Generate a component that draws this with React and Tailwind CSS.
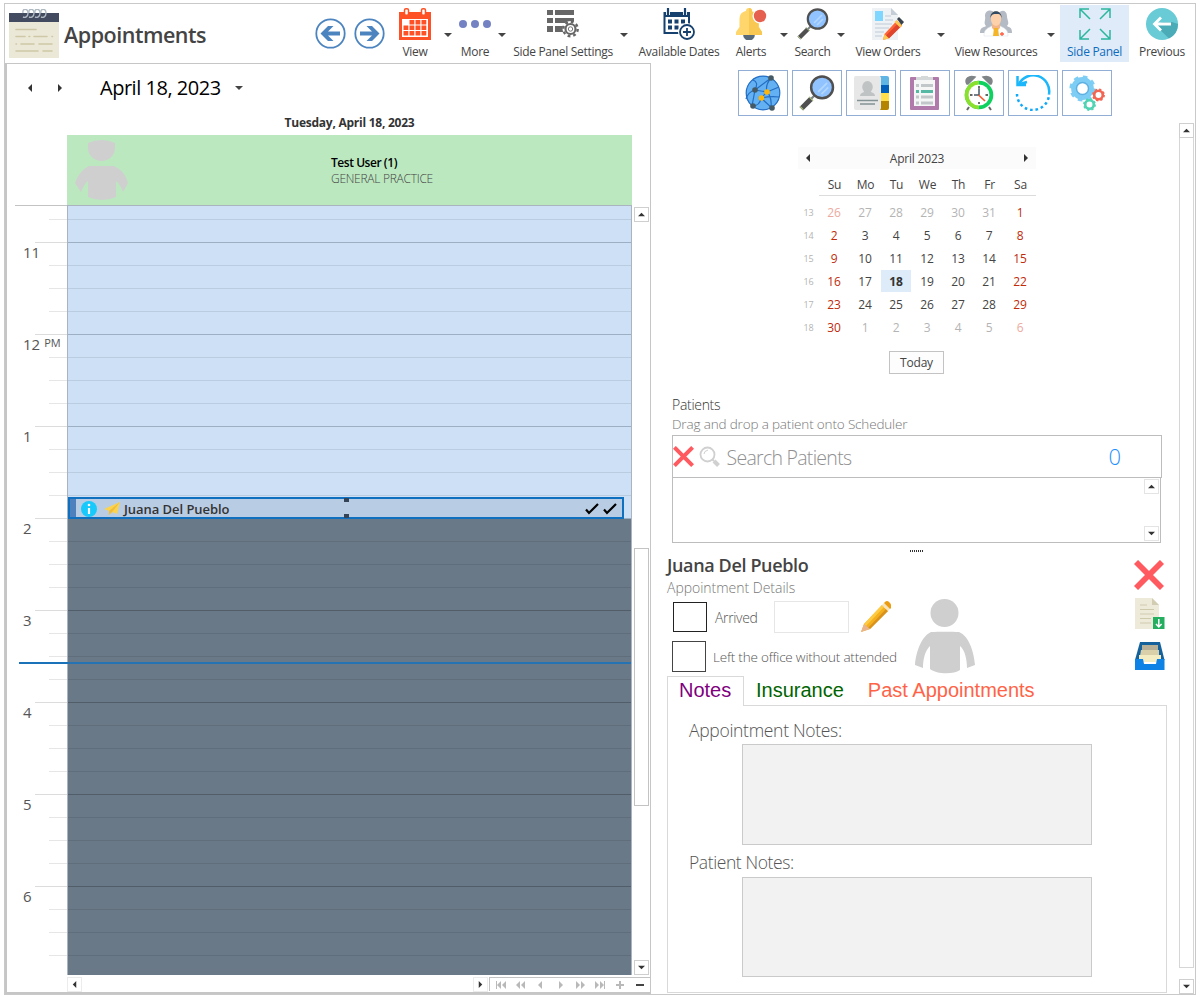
import React from "react";

const Caret = ({ className = "w-[26px]" }) => (
  <div className={`flex shrink-0 justify-center pt-[28px] ${className}`}>
    <svg width="8" height="4" viewBox="0 0 8 4"><path d="M0 0H8L4 4Z" fill="#444" /></svg>
  </div>
);

const Tri = ({ dir = "left", size = 7, color = "#333" }) => {
  const d = {
    left: "M6 0V8L2 4Z",
    right: "M2 0V8L6 4Z",
    up: "M0 6H8L4 2Z",
    down: "M0 2H8L4 6Z",
  }[dir];
  return <svg width={size} height={size} viewBox="0 0 8 8" className="block"><path d={d} fill={color} /></svg>;
};

const ScrollButton = ({ dir, className = "border-[#cfcfcf]" }) => (
  <div className={`flex h-[15px] w-[15px] shrink-0 items-center justify-center border bg-white ${className}`}>
    <Tri dir={dir} />
  </div>
);

const Tool = ({ label, width, active, children }) => (
  <div className={`flex h-[57px] shrink-0 flex-col items-center pt-[3px] ${width} ${active ? "bg-[#dfebf8] text-[#0f6cbd]" : "text-[#444]"}`}>
    <div className="flex h-8 w-8 items-center justify-center">{children}</div>
    <div className="mt-[3px] whitespace-nowrap text-[12px] leading-[18px] tracking-[-0.3px]">{label}</div>
  </div>
);

const NotepadIcon = () => (
  <svg width="50" height="49" viewBox="0 0 50 49">
    <rect y="4" width="50" height="45" fill="#ebe8d8" />
    <rect y="4" width="50" height="9" fill="#434b60" />
    <g fill="none" stroke="#aeb9c2" strokeWidth="1.400">
      {[15, 21, 27, 33].map((x) => <path key={x} d={`M${x - 1} 4c-1-5 5-5 5 0c0 4-3 5-5 4`} />)}
    </g>
    <g stroke="#cfc8a6" strokeWidth="1.600" strokeLinecap="round">
      <path d="M7 20.500H27M7 27.500H16M20 27.500h.8M25 27.500H38M43 27.500h.5M7 35h.5M12 35H25M30 35H43M7 42H29M34 42H43" />
    </g>
  </svg>
);

const RoundArrow = ({ flip }) => (
  <svg width="31" height="31" viewBox="0 0 31 31" className={flip ? "-scale-x-100" : ""}>
    <circle cx="15.500" cy="15.500" r="14.200" fill="white" stroke="#4c84c0" strokeWidth="1.800" />
    <path d="M5.500 15.500L13 8h5.500L13 13.600H25v3.800H13L18.500 23H13Z" fill="#4c84c0" />
  </svg>
);

const CalendarIcon = () => (
  <svg width="32" height="32" viewBox="0 0 32 32">
    <path d="M0 4H32V32H0Z" fill="#fe5125" />
    <rect x="5.500" y="0.800" width="4" height="6.500" rx="1.500" fill="#fff" stroke="#fe5125" strokeWidth="1.500" />
    <rect x="22.500" y="0.800" width="4" height="6.500" rx="1.500" fill="#fff" stroke="#fe5125" strokeWidth="1.500" />
    <rect x="3" y="11" width="26" height="18" fill="#fff" />
    {[0, 1, 2].map((r) => [0, 1, 2, 3].map((c) => (r === 0 && c === 0 ? null :
      <rect key={`${r}-${c}`} x={4.500 + c * 6} y={12 + r * 5.500} width="4.800" height="4.500" fill="#fe5125" />)))}
  </svg>
);

const PanelSettingsIcon = () => (
  <svg width="32" height="32" viewBox="0 0 32 32">
    <g fill="#676767">
      <path d="M0 2h6v5H0zM8 2h19v5H8zM0 10h6v5H0zM8 10h19v5H8zM0 18h6v6H0zM8 18h9v6H8z" />
    </g>
    <circle cx="23.500" cy="21" r="8" fill="#fff" />
    <circle cx="23.500" cy="21" r="7.200" fill="none" stroke="#676767" strokeWidth="2.400" strokeDasharray="2.830" />
    <circle cx="23.500" cy="21" r="5" fill="none" stroke="#676767" strokeWidth="2.200" />
    <circle cx="23.500" cy="21" r="2.200" fill="#fff" stroke="#777" />
  </svg>
);

const AvailableIcon = () => (
  <svg width="32" height="32" viewBox="0 0 32 32" fill="none" stroke="#16416e">
    <path d="M1.500 4V25h16" strokeWidth="2" /><path d="M1 6.500h26" strokeWidth="5" /><path d="M26 5v14" strokeWidth="2" />
    <path d="M5 1v6M22 1v6" stroke="#fff" strokeWidth="4" /><path d="M5 0v7M22 0v7" strokeWidth="2.200" />
    <path d="M5 13.500h4M11.500 13.500h4M18 13.500h4M5 19.500h4M11.500 19.500h4" strokeWidth="4" />
    <circle cx="24" cy="24" r="8" fill="#fff" stroke="#fff" strokeWidth="2" />
    <circle cx="24" cy="24" r="7" fill="#fff" strokeWidth="1.800" /><path d="M20 24h8M24 20v8" strokeWidth="1.800" />
  </svg>
);

const BellIcon = () => (
  <svg width="32" height="32" viewBox="0 0 32 32">
    <path d="M8 26h12a5 5.500 0 0 1-12 0" fill="#58697a" />
    <path d="M14 0a3 3 0 0 0-3 3C6 4 4.500 7 4.500 12v7L1 24v3h26v-3l-3-5V4H17a3 3 0 0 0-3-4" fill="#fed66b" />
    <path d="M14 0v27h13v-3l-3.500-5v-7C23.500 7 21 4 17 3.500A3 3 0 0 0 14 0" fill="#f9c852" />
    <circle cx="25" cy="8" r="7.500" fill="#fff" /><circle cx="25" cy="8" r="6.200" fill="#e5604f" />
  </svg>
);

const Magnifier = ({ size = 32 }) => (
  <svg width={size} height={size} viewBox="0 0 32 32">
    <path d="M14 18L10 22" stroke="#7d8488" strokeWidth="2" />
    <path d="M11 21L2 30" stroke="#505050" strokeWidth="4.500" />
    <path d="M9 19.500l3.500 3.500M1 28l3 3" stroke="#a8bf80" strokeWidth="1" />
    <circle cx="20.500" cy="11" r="9.700" fill="#90c3ff" stroke="#505050" strokeWidth="2.200" />
    <path d="M17 15l8-8M20 17l6-6" stroke="#b4d7ff" strokeWidth="1.500" />
  </svg>
);

const OrdersIcon = () => (
  <svg width="32" height="32" viewBox="0 0 32 32">
    <path d="M0 0H19L26 7V32H0Z" fill="#eff2f5" /><path d="M19 0V7h7Z" fill="#c5cdd7" />
    <rect x="3" y="3" width="8" height="10" fill="#7fd6ff" />
    <path d="M13 8h6M13 12h8M3 16h17M3 20h14M3 24h9M3 28h7" stroke="#d1d8e0" strokeWidth="1.300" />
    <path d="M11 32l1.500-6L25 12.500l5 5L17 30Z" fill="#ff6536" /><path d="M13.500 28L27 14.500l3 3L17 30.500Z" fill="#df452d" />
    <path d="M11 32l1.500-6 4.500 4.500Z" fill="#ffc951" /><path d="M22.500 14l5.500 5.500 2-2L24.500 12Z" fill="#ffc951" />
    <path d="M25 11l2-2 5 5-2.500 3Z" fill="#38424c" />
  </svg>
);

const ResourcesIcon = () => (
  <svg width="32" height="32" viewBox="0 0 32 32">
    <path d="M0 25c0-6 3-5 6-7C3 15 6 12 5 8c0-6 7-7 9-3h5c3-4 8-2 8 3c0 4 3 7 0 10c3 2 5 1 5 7Z" fill="#b5bbc4" />
    <path d="M4 28c0-7 4-8 8-10h8c4 2 8 3 8 10Z" fill="#fff" stroke="#dfe4e8" strokeWidth=".6" />
    <path d="M12 16h8v4l-4 4-4-4Z" fill="#f3b58b" />
    <path d="M11 7c0-5 10-5 10 0v4c0 9-10 9-10 0Z" fill="#ffd1ab" /><path d="M10.500 10c-1-9 12-9 11 0c-1-4-2-4-5-4s-5 0-6 4" fill="#334c63" />
    <path d="M14 20h4l1 8H13Z" fill="#f5b52a" /><path d="M20 26h4M22 24v4" stroke="#ff5c40" strokeWidth="1.300" />
  </svg>
);

const ExpandIcon = () => (
  <svg width="32" height="32" viewBox="0 0 32 32" fill="none" stroke="#2bb79e" strokeWidth="1.500">
    <path d="M1 10V1H10M1 1L11 11M22 1H31V10M31 1L21 11M1 22V31H10M1 31L11 21M22 31H31V22M31 31L21 21" />
  </svg>
);

const PreviousIcon = () => (
  <svg width="32" height="32" viewBox="0 0 32 32">
    <circle cx="16" cy="16" r="16" fill="#69cbd5" />
    <path d="M9 17l14 13.500a16 16 0 0 0 9-14.500l-6-2H17Z" fill="#4bacb7" />
    <path d="M25 16H9M15 9.500L8.500 16l6.500 6.500" fill="none" stroke="#fff" strokeWidth="2.800" />
  </svg>
);

const GlobeIcon = () => (
  <svg width="36" height="36" viewBox="0 0 36 36">
    <circle cx="18" cy="18" r="17" fill="#63b1f2" />
    <g fill="none" stroke="#246ec4" strokeWidth="1.200">
      <circle cx="18" cy="18" r="16.800" /><path d="M26 3Q20 10 22 17L34 12M22 17L10 15Q3 17 1 24M10 15Q14 7 8 5M10 15L7 31Q15 31 16 23L22 17Q27 22 26 32M16 23Q25 21 34 22M10 15Q18 9 26 3M16 23L27 33" />
    </g>
    <g fill="#455a64"><circle cx="26" cy="3" r="2.800" /><circle cx="10" cy="15" r="2.800" /><circle cx="8" cy="31" r="2.800" /><circle cx="27" cy="33" r="2.800" /></g>
    <g fill="#ffb507"><circle cx="22" cy="17" r="2.800" /><circle cx="16.500" cy="23" r="2.800" /></g>
  </svg>
);

const ContactIcon = () => (
  <svg width="35" height="34" viewBox="0 0 35 34">
    <path d="M26 0h7q2 0 2 2v7h-9Z" fill="#5fb5e4" /><path d="M26 9h9v8h-9Z" fill="#0060b9" /><path d="M26 17h9v8h-9Z" fill="#ffe04a" /><path d="M26 25h9v7q0 2-2 2h-7Z" fill="#b58500" />
    <rect width="27" height="34" rx="2" fill="#e7e7e7" />
    <ellipse cx="13.500" cy="11" rx="5.300" ry="6" fill="#bfc3c4" /><path d="M6 20c0-6 15-6 15 0Z" fill="#bfc3c4" />
    <path d="M3 24.500H24M6 28H21" stroke="#839295" strokeWidth="1.300" />
  </svg>
);

const ClipboardIcon = () => (
  <svg width="30" height="34" viewBox="0 0 30 34">
    <rect y="1" width="29" height="33" rx="1" fill="#b07bab" /><rect x="4" y="4" width="21" height="26" fill="#f5f6f6" />
    <path d="M6 1H11V-1H18V1H23V4H6Z" fill="#d5d8d9" />
    <path d="M6 9.500h3M6 21h3M6 27h3M11 9.500h12M11 21h12M11 27h12" stroke="#c2c7c9" strokeWidth="3" />
    <path d="M6 15.500h3M11 15.500h12" stroke="#55b9a4" strokeWidth="3" />
  </svg>
);

const ClockIcon = () => (
  <svg width="30" height="36" viewBox="0 0 30 36">
    <path d="M5 32L3 35M25 32l2 3" stroke="#666" strokeWidth="2" />
    <path d="M3 9C0 4 5 0 11 2L4 9ZM27 9c3-5-2-9-8-7L26 9Z" fill="#7f8487" stroke="#7f8487" strokeWidth="1.500" />
    <circle cx="15" cy="20" r="14.300" fill="#0fd15f" /><path d="M15 5.700a14.300 14.300 0 0 0 0 28.600Z" fill="#8ae02d" />
    <circle cx="15" cy="20" r="10.500" fill="#fff" />
    <path d="M15 11v2.500M15 27v2M6 20h2.500M21.500 20H24" stroke="#333" strokeWidth="1.400" />
    <path d="M15 13.500V20M10 20h5" stroke="#455a64" strokeWidth="1.500" /><path d="M14.500 20l6.500 6" stroke="#f15a2e" strokeWidth="1.700" />
  </svg>
);

const RefreshIcon = () => (
  <svg width="36" height="36" viewBox="0 0 36 36" fill="none" stroke="#10a8f8" strokeWidth="2.500">
    <path d="M34 19A16 16 0 0 0 4 9" stroke="#1bb7fa" /><path d="M2.500 1V10H11M3 9.500L12 7" stroke="#1bb7fa" />
    <path d="M2 19A16 16 0 0 0 34 19" strokeDasharray="2.600 2.900" />
  </svg>
);

const Gear = ({ cx, cy, r, color, hole, teeth = 8 }) => (
  <g>
    <circle cx={cx} cy={cy} r={r * 0.68} fill="none" stroke={color} strokeWidth={r * 0.42} />
    <circle cx={cx} cy={cy} r={r * 0.88} fill="none" stroke={color} strokeWidth={r * 0.28} strokeDasharray={(r * 0.88 * Math.PI) / teeth} />
    {hole && <circle cx={cx} cy={cy} r={r * 0.47} fill="none" stroke={hole} strokeWidth="1.500" />}
  </g>
);
const GearsIcon = () => (
  <svg width="36" height="36" viewBox="0 0 36 36">
    <Gear cx={13.500} cy={13.500} r={12.800} color="#7dcdf4" hole="#5fb0e2" />
    <Gear cx={29.500} cy={20} r={6.300} color="#f26553" /><Gear cx={20.500} cy={29.500} r={6.300} color="#52d3b4" />
  </svg>
);

const Cross = ({ size }) => (
  <svg width={size} height={size} viewBox="0 0 30 30"><path d="M2 2L28 28M28 2L2 28" stroke="#ff5a5f" strokeWidth="5.800" /></svg>
);

const Person = () => (
  <svg width="62" height="76" viewBox="0 0 62 76" fill="#cfcfcf">
    <circle cx="30.500" cy="15" r="14" />
    <path d="M17 34C24 33.500 38 33.500 45 34C55 38 60 54 61 67L53 70C53 62 51 52 46 48V72C39 77 22 76 16 71V48C11 53 9 61 9 70L1 67C2 53 8 38 17 34Z" />
  </svg>
);

const DocIcon = () => (
  <svg width="30" height="31" viewBox="0 0 30 31">
    <path d="M0 0H17L24 7V31H0Z" fill="#edeada" /><path d="M17 0V7h7Z" fill="#d2ccb3" />
    <path d="M5 7h7M5 11.500h14M5 16h14M5 20.500h11M5 25h11" stroke="#cfc9ac" strokeWidth="1.200" />
    <rect x="18" y="19" width="11.500" height="12" fill="#24ae5f" /><path d="M23.800 21v8M21 26l2.800 3 2.800-3" fill="none" stroke="#fff" strokeWidth="1.500" />
  </svg>
);

const TrayIcon = () => (
  <svg width="30" height="28" viewBox="0 0 30 28">
    <path d="M5 0H25L29.500 18H0Z" fill="#15619b" /><path d="M7 3H23V9H7Z" fill="#b7af96" /><path d="M6 8H24V14H5Z" fill="#d9d0aa" />
    <path d="M4 13H26V20H4Z" fill="#f4ecc2" /><path d="M0 17H8L9 22H21L22 17H29.500V28H0Z" fill="#0f82e6" />
  </svg>
);

const PencilIcon = () => (
  <svg width="31" height="32" viewBox="0 0 31 32">
    <path d="M1 31L4 23L22 4L28 10L10 28Z" fill="#f4b01d" /><path d="M4 23L22 4l2 2L6 25Z" fill="#ffca43" /><path d="M8 27L26 8l2 2L10 28Z" fill="#d9921e" />
    <path d="M1 31L4 23L10 28Z" fill="#e8b58f" /><path d="M22 4l6 6 2-2-6-6Z" fill="#f5e4bd" /><path d="M24 2q3-4 6 0t0 6Z" fill="#eb9c10" />
  </svg>
);

const Check = () => (
  <svg width="14" height="13" viewBox="0 0 14 13"><path d="M1 7.500L4 11L13 2" fill="none" stroke="#000" strokeWidth="2.200" /></svg>
);

const hours = ["11", "12", "1", "2", "3", "4", "5", "6"];

const Ruler = () => (
  <div className="h-[770px] w-[60px] shrink-0 overflow-hidden">
    <div className="ml-[8px] h-px bg-[#c3c3c3]" />
    <div className="ml-[42px] h-[14px] border-b border-[#e6e6e6]" />
    <div className="ml-[28px] h-[23px] border-b border-[#dcdcdc]" />
    {hours.map((h) => (
      <div key={h} className="flex h-[92px]">
        <div className="-mt-px flex w-[28px] shrink-0 items-start gap-[4px] whitespace-nowrap pl-[16px] text-[15px] leading-5 text-[#555]">
          {h}
          {h === "12" && <span className="text-[11px] leading-[18px]">PM</span>}
        </div>
        <div className="w-8">
          <div className="ml-[14px] h-[23px] border-b border-[#e6e6e6]" />
          <div className="ml-[14px] h-[23px] border-b border-[#e6e6e6]" />
          <div className="ml-[14px] h-[23px] border-b border-[#e6e6e6]" />
          <div className="h-[23px] border-b border-[#dcdcdc]" />
        </div>
      </div>
    ))}
  </div>
);

const Slots = () => (
  <div className="h-[769px] overflow-hidden">
    <div className="h-[14px] border-b border-[#b9cce0] bg-[#cee0f5]" />
    <div className="h-[23px] border-b border-[#9dafc3] bg-[#cee0f5]" />
    {Array.from({ length: 32 }, (_, i) => {
      const dark = i >= 12;
      const hour = i % 4 === 3;
      const line = dark ? (hour ? "border-[#515d69]" : "border-[#606d7b]") : hour ? "border-[#9dafc3]" : "border-[#b9cce0]";
      return <div key={i} className={`h-[23px] border-b ${dark ? "bg-[#6a7987]" : "bg-[#cee0f5]"} ${line}`} />;
    })}
  </div>
);

const Appointment = () => (
  <div className="absolute left-0 top-[291px] flex h-[22px] w-[556px] items-center border-2 border-[#0f70c0] bg-[#b8cce4]">
    <div className="h-full w-[6px] bg-[#4e80bd]" />
    <svg className="ml-[5px] mt-px" width="16" height="16" viewBox="0 0 16 16">
      <circle cx="8" cy="8" r="8" fill="#18c9fb" /><path d="M8 7v6" stroke="#fff" strokeWidth="2.200" /><circle cx="8" cy="4" r="1.300" fill="#fff" />
    </svg>
    <svg className="ml-[7px] mt-px" width="16" height="14" viewBox="0 0 16 14">
      <path d="M0 7L16 0L13 12L8 10L5 13V9Z" fill="#fbd34f" /><path d="M16 0L5 9v4l3-3Z" fill="#efbd3a" />
    </svg>
    <span className="ml-[4px] mt-[2px] text-[13px] font-semibold leading-4 tracking-[-0.050px] text-[#333]">Juana Del Pueblo</span>
    <div className="absolute -top-px left-[274px] h-[4px] w-[5px] bg-[#344456]" />
    <div className="absolute -bottom-px left-[274px] h-[4px] w-[5px] bg-[#344456]" />
    <div className="ml-auto mt-px flex gap-[4px] pr-[5px]"><Check /><Check /></div>
  </div>
);

const NavIcon = ({ kind }) => {
  const c = kind === "minus" ? "#444" : "#b9b9b9";
  const d = {
    first: "M0 0h1v8h-1zM5 0v8L1 4zM10 0v8L6 4z",
    back2: "M4 0v8L0 4zM9 0v8L5 4z",
    back: "M6 0v8L2 4z",
    fwd: "M3 0v8L7 4z",
    fwd2: "M1 0v8L5 4zM6 0v8L10 4z",
    last: "M9 0h1v8h-1zM0 0v8L4 4zM5 0v8L9 4z",
    plus: "M4 0h2v3h3v2h-3v3h-2v-3h-3v-2h3z",
    minus: "M1 3h8v2h-8z",
  }[kind];
  return <div className="flex flex-1 justify-center"><svg width="10" height="8" viewBox="0 0 10 8"><path d={d} fill={c} /></svg></div>;
};

const Scheduler = () => (
  <section className="flex h-[931px] w-[646px] shrink-0 flex-col border-b-2 border-l-2 border-r border-t border-[#c6c6c6]">
    <div className="flex h-[47px] items-center pl-[19px]">
      <Tri dir="left" size={8} /><div className="w-[22px]" /><Tri dir="right" size={8} />
      <div className="ml-[36px] w-[122px] whitespace-nowrap text-[20px] leading-7 tracking-[-0.480px] text-black">April 18, 2023</div>
      <svg className="ml-[13px]" width="8" height="4" viewBox="0 0 8 4"><path d="M0 0H8L4 4Z" fill="#444" /></svg>
    </div>
    <div className="ml-[60px] h-[24px] w-[565px] pt-[3px] text-center text-[12px] font-bold leading-[18px] tracking-[-0.250px] text-[#333]">Tuesday, April 18, 2023</div>
    <div className="ml-[60px] flex h-[70px] w-[565px] bg-[#bce8c0]">
      <svg className="ml-[8px] mt-[5px]" width="54" height="61" viewBox="0 0 54 61" fill="#cfcfcf">
        <path d="M13 3Q27-3 40 3V9C38 25 15 25 13 9Z" /><path d="M14 26H39Q50 31 53 43L48 52Q45 44 41 41V57Q27 63 13 57V41Q9 44 6 52L0 43Q4 31 14 26Z" />
      </svg>
      <div className="ml-[202px] pt-[20px] text-[12px] leading-4 tracking-[-0.450px]">
        <div className="font-semibold text-black">Test User (1)</div>
        <div className="font-light tracking-[-0.280px] text-[#444]">GENERAL PRACTICE</div>
      </div>
    </div>
    <div className="flex h-[770px]">
      <Ruler />
      <div className="relative h-[770px] w-[565px] border-l border-r border-t border-[#a9b4c0]">
        <Slots />
        <Appointment />
        <div className="absolute -left-[49px] top-[456px] h-[2px] w-[49px] bg-[#1a72b8]" />
        <div className="absolute left-0 top-[456px] h-[2px] w-full bg-[#2573b3]" />
      </div>
      <div className="ml-[2px] flex w-[15px] flex-col pt-[2px]">
        <ScrollButton dir="up" />
        <div className="mt-[326px] h-[258px] border border-[#c3c3c3] bg-white" />
        <ScrollButton dir="down" className="mt-auto border-[#cfcfcf]" />
      </div>
    </div>
    <div className="flex h-[16px] pl-[60px] pt-[2px]">
      <ScrollButton dir="left" className="border-[#ececec]" />
      <ScrollButton dir="right" className="ml-[391px] border-[#ececec]" />
      <div className="ml-[1px] flex flex-1 items-center border-l border-t border-[#c3c3c3] pl-px">
        {["first", "back2", "back", "fwd", "fwd2", "last", "plus", "minus"].map((k) => <NavIcon key={k} kind={k} />)}
      </div>
    </div>
  </section>
);

const weeks = [
  [13, 26, 27, 28, 29, 30, 31, 1],
  [14, 2, 3, 4, 5, 6, 7, 8],
  [15, 9, 10, 11, 12, 13, 14, 15],
  [16, 16, 17, 18, 19, 20, 21, 22],
  [17, 23, 24, 25, 26, 27, 28, 29],
  [18, 30, 1, 2, 3, 4, 5, 6],
];

const dayColor = (row, col, day) => {
  const outside = (row === 0 && day > 20) || (row === 5 && day < 20);
  if (col === 0 || col === 6) return outside ? "text-[#ecaa9e]" : "text-[#c02b0a]";
  return outside ? "text-[#b4b4b4]" : "text-[#444]";
};

const MonthCalendar = () => (
  <div className="ml-[147px] mt-[31px] w-[238px] text-[12px] tracking-[-0.2px] text-[#444]">
    <div className="flex h-[22px] items-center justify-between bg-[#fbfbfb] px-[6px]">
      <Tri dir="left" size={8} /><span className="pt-[2px]">April 2023</span><Tri dir="right" size={8} />
    </div>
    <div className="ml-[21px] flex h-[27px] border-b border-[#dcdcdc] pt-[7px]">
      {["Su", "Mo", "Tu", "We", "Th", "Fr", "Sa"].map((d) => <div key={d} className="w-[31px] shrink-0 text-center leading-[18px]">{d}</div>)}
    </div>
    <div className="mt-[5px]">
      {weeks.map(([week, ...days], r) => (
        <div key={week} className="flex h-[23px]">
          <div className="w-[21px] text-center text-[9px] leading-[23px] text-[#b4b4b4]">{week}</div>
          {days.map((day, c) => (
            <div key={c} className={`mr-px h-[22px] w-[30px] shrink-0 text-center leading-[23px] ${r === 3 && c === 2 ? "bg-[#deebf9] font-bold text-[#333]" : dayColor(r, c, day)}`}>{day}</div>
          ))}
        </div>
      ))}
    </div>
    <div className="ml-[91px] mt-[12px] flex h-[23px] w-[55px] items-center justify-center border border-[#c3c3c3] bg-[#fdfdfd] pt-px">Today</div>
  </div>
);

const Patients = () => (
  <div className="ml-[21px] mt-[21px] w-[490px]">
    <div className="h-[19px] text-[14px] font-light leading-[20px] tracking-[-0.3px] text-[#333]">Patients</div>
    <div className="h-[21px] text-[13.500px] font-light leading-[20px] tracking-[-0.160px] text-[#777]">Drag and drop a patient onto Scheduler</div>
    <div className="flex h-[43px] items-center border border-[#bdbdbd]">
      <Cross size={21} />
      <svg className="ml-[5px]" width="22" height="22" viewBox="0 0 22 22" fill="none" stroke="#d0d0d0">
        <circle cx="8.500" cy="8.500" r="7" strokeWidth="1.800" /><path d="M5 8q0-3 4-4" /><path d="M13 13l2 2" strokeWidth="2" /><path d="M15 15l4.500 4.500" strokeWidth="4" />
      </svg>
      <span className="ml-[5.500px] pt-[3px] text-[19.500px] font-light leading-6 tracking-[-0.720px] text-[#909090]">Search Patients</span>
      <span className="ml-auto mr-[40px] text-[22px] font-light text-[#1e90ff]">0</span>
    </div>
    <div className="flex h-[65px] w-[489px] flex-col items-end justify-between border border-t-0 border-[#bdbdbd] py-[1px] pr-px">
      <ScrollButton dir="up" className="border-[#e4e4e4]" /><ScrollButton dir="down" className="border-[#e4e4e4]" />
    </div>
    <div className="ml-[238px] mt-[7px] flex gap-px">
      {Array.from({ length: 7 }, (_, i) => <div key={i} className="h-[2px] w-px bg-[#333]" />)}
    </div>
  </div>
);

const Details = () => (
  <div className="ml-[16px] mt-[1px] flex h-[123px] w-[500px]">
    <div className="w-[232px] shrink-0 whitespace-nowrap font-light text-[#555]">
      <div className="h-[24px] text-[18px] font-semibold leading-[25px] tracking-[-0.370px] text-[#444]">Juana Del Pueblo</div>
      <div className="h-[22px] text-[14px] leading-[22px] tracking-[-0.020px] text-[#777]">Appointment Details</div>
      <div className="flex h-[39px] items-start pl-[6px] pt-[2px]">
        <div className="mt-[1px] h-[30px] w-[34px] border border-[#222]" />
        <div className="ml-[8px] w-[59px] text-[14px] leading-[33px] tracking-[-0.350px]">Arrived</div>
        <div className="h-[32px] w-[75px] border border-[#e6e6e6]" />
        <div className="ml-[11px]"><PencilIcon /></div>
      </div>
      <div className="flex h-[39px] items-start pl-[5px] pt-[3px]">
        <div className="h-[31px] w-[34px] shrink-0 border border-[#444]" />
        <div className="ml-[7px] text-[13.500px] leading-[33px] tracking-[-0.210px]">Left the office without attended</div>
      </div>
    </div>
    <div className="ml-[15px] pt-[45px]"><Person /></div>
    <div className="ml-auto flex w-[32px] flex-col items-start pt-[7px]">
      <div className="-ml-px"><Cross size={30} /></div><div className="mt-[8px]"><DocIcon /></div><div className="mt-[13px]"><TrayIcon /></div>
    </div>
  </div>
);

const NotesPanel = () => (
  <div className="ml-[16px] w-[500px]">
    <div className="flex h-[30px] font-['Liberation_Sans',sans-serif] text-[20px] leading-[27px]">
      <div className="z-10 h-[30px] w-[77px] border border-b-0 border-[#d9d9d9] bg-white pl-[11px] text-[#800080]">Notes</div>
      <div className="pl-[12px] pt-px text-[#006400]">Insurance</div>
      <div className="pl-[24px] pt-px text-[#ff6347]">Past Appointments</div>
    </div>
    <div className="-mt-px h-[288px] border border-[#d9d9d9] pl-[21px] pt-[12px] text-[17.500px] font-light tracking-[-0.3px] text-[#555]">
      <div className="h-[26px] leading-[24px]">Appointment Notes:</div>
      <div className="ml-[53px] h-[101px] w-[350px] border border-[#cacaca] bg-[#f2f2f2]" />
      <div className="mt-[5px] h-[27px] leading-[24px] tracking-[-0.4px]">Patient Notes:</div>
      <div className="ml-[53px] h-[100px] w-[350px] border border-[#cacaca] bg-[#f2f2f2]" />
    </div>
  </div>
);

const quickTools = [GlobeIcon, () => <Magnifier size={36} />, ContactIcon, ClipboardIcon, ClockIcon, RefreshIcon, GearsIcon];

export default function App() {
  return (
    <div className="h-[997px] w-[1203px] overflow-hidden bg-white pl-[4px] pt-[3px] font-['Open_Sans','Noto_Sans',sans-serif]">
      <div className="h-[992px] w-[1192px] border border-[#c9c9c9]">
        <header className="flex h-[59px] items-start pt-px">
          <div className="ml-[4px] pt-[4px]"><NotepadIcon /></div>
          <h1 className="ml-[5px] w-[251px] pt-[14px] text-[21.500px] font-semibold leading-[32px] tracking-[-0.480px] text-[#444]">Appointments</h1>
          <div className="flex w-[80px] gap-[8px] pt-[13px]"><RoundArrow /><RoundArrow flip /></div>
          <Tool label="View" width="w-[40px]"><CalendarIcon /></Tool>
          <Caret />
          <Tool label="More" width="w-[28px]">
            <svg width="32" height="32" viewBox="0 0 32 32" fill="#7482c4"><circle cx="4" cy="16" r="4" /><circle cx="16" cy="16" r="4" /><circle cx="28" cy="16" r="4" /></svg>
          </Tool>
          <Caret />
          <Tool label="Side Panel Settings" width="w-[96px]"><PanelSettingsIcon /></Tool>
          <Caret />
          <Tool label="Available Dates" width="w-[84px]"><AvailableIcon /></Tool>
          <div className="ml-[11px]"><Tool label="Alerts" width="w-[38px]"><BellIcon /></Tool></div>
          <Caret className="ml-px w-[26px]" />
          <Tool label="Search" width="w-[31px]"><Magnifier /></Tool>
          <Caret />
          <Tool label="View Orders" width="w-[68px]"><OrdersIcon /></Tool>
          <Caret className="ml-[6px] w-[26px]" />
          <Tool label="View Resources" width="w-[84px]"><ResourcesIcon /></Tool>
          <Caret className="ml-[4px] w-[18px]" />
          <Tool label="Side Panel" width="w-[69px]" active><ExpandIcon /></Tool>
          <Tool label="Previous" width="w-[66px]"><PreviousIcon /></Tool>
        </header>
        <div className="flex h-[931px]">
          <Scheduler />
          <aside className="w-[528px] shrink-0">
            <div className="ml-[87px] flex gap-[4px] pt-[7px]">
              {quickTools.map((Icon, i) => (
                <div key={i} className="flex h-[46px] w-[50px] items-center justify-center border-[1.500px] border-[#92aed4]"><Icon /></div>
              ))}
            </div>
            <MonthCalendar />
            <Patients />
            <Details />
            <NotesPanel />
          </aside>
          <div className="flex w-[15px] shrink-0 flex-col pt-[60px]">
            <ScrollButton dir="up" />
            <div className="h-[830px] border border-t-0 border-[#d6d6d6]" />
            <ScrollButton dir="down" className="mt-auto border-[#cfcfcf]" />
          </div>
        </div>
      </div>
    </div>
  );
}
